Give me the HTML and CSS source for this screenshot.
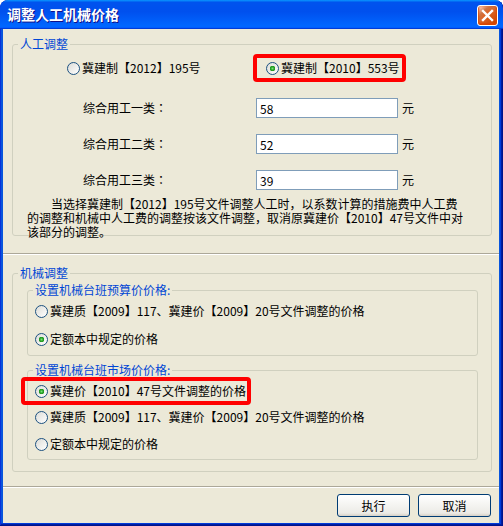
FILE: index.html
```html
<!DOCTYPE html>
<html lang="zh-CN">
<head>
<meta charset="utf-8">
<title>调整人工机械价格</title>
<link rel="stylesheet" href="styles.css">
</head>
<body>
<div class="window">
  <div class="titlebar">
    <span class="title">调整人工机械价格</span>
    <button class="close" aria-label="关闭"><svg viewBox="0 0 19 19" width="19" height="19"><path d="M5 5 L14 14 M14 5 L5 14" stroke="#fff" stroke-width="2.4" stroke-linecap="square" fill="none"/></svg></button>
  </div>
  <div class="client">
    <fieldset class="group labor">
      <legend>人工调整</legend>
      <div class="labor-choice">
        <label class="radio opt-first"><span class="dot"></span>冀建制【2012】195号</label>
        <label class="radio highlight opt-second"><span class="dot checked"></span>冀建制【2010】553号</label>
      </div>
      <div class="rates">
        <span class="rate-label">综合用工一类<span class="colon" lang="ja">：</span></span><input class="rate-input" value="58"><span class="unit">元</span>
        <span class="rate-label">综合用工二类<span class="colon" lang="ja">：</span></span><input class="rate-input" value="52"><span class="unit">元</span>
        <span class="rate-label">综合用工三类<span class="colon" lang="ja">：</span></span><input class="rate-input" value="39"><span class="unit">元</span>
      </div>
      <p class="note">当选择冀建制【2012】195号文件调整人工时，以系数计算的措施费中人工费<br>的调整和机械中人工费的调整按该文件调整，取消原冀建价【2010】47号文件中对<br>该部分的调整。</p>
    </fieldset>
    <div class="sep"></div>
    <fieldset class="group machine">
      <legend>机械调整</legend>
      <fieldset class="subgroup budget">
        <legend>设置机械台班预算价价格:</legend>
        <label class="radio item"><span class="dot"></span>冀建质【2009】117、冀建价【2009】20号文件调整的价格</label>
        <label class="radio item"><span class="dot checked"></span>定额本中规定的价格</label>
      </fieldset>
      <fieldset class="subgroup market">
        <legend>设置机械台班市场价价格:</legend>
        <label class="radio item highlight"><span class="dot checked"></span>冀建价【2010】47号文件调整的价格</label>
        <label class="radio item"><span class="dot"></span>冀建质【2009】117、冀建价【2009】20号文件调整的价格</label>
        <label class="radio item last"><span class="dot"></span>定额本中规定的价格</label>
      </fieldset>
    </fieldset>
    <div class="sep bottom-sep"></div>
    <div class="actions">
      <button class="btn">执行</button>
      <button class="btn">取消</button>
    </div>
  </div>
</div>
</body>
</html>
```

FILE: styles.css
```css
* { box-sizing: border-box; }
html, body { margin: 0; padding: 0; background: #ffffff; }
body {
  font-family: "Noto Sans CJK SC", "Liberation Sans", sans-serif;
  font-size: 12px;
  color: #000;
}

.window {
  width: 503px;
  height: 526px;
  display: flex;
  flex-direction: column;
  background: #0855dd;
  border-radius: 8px 8px 0 0;
  overflow: hidden;
  box-shadow: inset -1px -1px #00138c, inset 1px 0 #0831d9, inset -2px -2px #001ea0, inset -3px -3px #003bda;
}

.titlebar {
  height: 29px;
  flex: none;
  display: flex;
  align-items: flex-start;
  justify-content: space-between;
  padding: 0 5px 0 7px;
  background: linear-gradient(180deg, #0997ff, #0053ee 8%, #0050ee 40%, #0066ff 88%, #0066ff 93%, #005bff 95%, #003dd7 96%, #003dd7);
  border-radius: 8px 8px 0 0;
}
.title {
  color: #fff;
  font-weight: bold;
  font-size: 14px;
  line-height: 29px;
  text-shadow: 1px 1px #0f1089;
}
.close {
  margin-top: 5px;
  width: 21px;
  height: 21px;
  padding: 0;
  display: flex;
  align-items: center;
  justify-content: center;
  border: 1px solid #fff;
  border-radius: 3px;
  background: radial-gradient(circle at 90% 90%, #cc4600 0%, #dc6527 55%, #cd7546 70%, #ffccb2 90%, #fff 100%);
  box-shadow: inset 0 -1px 2px 1px #da4600;
}

.client {
  flex: 1;
  margin: 0 4px 3px 3px;
  background: #ece9d8;
  display: flex;
  flex-direction: column;
}

fieldset {
  margin: 0;
  padding: 0;
  border: 1px solid #d0d0bf;
  border-radius: 3px;
  min-width: 0;
}
legend {
  margin-left: 5px;
  padding: 0 2px;
  line-height: 14px;
  color: #0046d5;
  font-size: 12px;
}

.group { margin: 8px 7px 0 9px; }
.machine { margin-top: 11px; padding-bottom: 11px; }

.radio {
  display: flex;
  align-items: center;
  gap: 2px;
  white-space: nowrap;
  line-height: 14px;
}
.dot {
  flex: none;
  width: 13px;
  height: 13px;
  border-radius: 50%;
  border: 1px solid #1c5180;
  background: linear-gradient(135deg, #dcdcd7, #ffffff);
}
.dot.checked {
  background: radial-gradient(circle at 50% 50%, #7be07b 0, #2aa82a 1.6px, #1e8f1e 2.6px, transparent 3px), linear-gradient(135deg, #dcdcd7, #ffffff);
}

.highlight {
  border: 4px solid #ff0000;
  border-radius: 4px;
}

.labor-choice {
  display: flex;
  margin-top: 3px;
  padding-left: 54px;
  height: 28px;
}
.opt-first { width: 186px; }
.opt-second { width: 153px; padding-left: 9px; }

.rates {
  display: grid;
  grid-template-columns: 169px 142px auto;
  column-gap: 4px;
  row-gap: 16px;
  margin-top: 16px;
  padding-left: 70px;
  align-items: center;
}
.rate-label { line-height: 20px; }
.rates .rate-label { margin-right: -4px; }
.colon { font-family: "Noto Sans CJK JP", "Noto Sans CJK SC", sans-serif; }
.rate-input {
  width: 142px;
  height: 20px;
  border: 1px solid #7f9db9;
  padding: 0 3px;
  font-family: inherit;
  font-size: 12px;
  color: #000;
  background: #fff;
  outline: none;
}
.unit { line-height: 20px; }

.note {
  margin: 7px 0 -4px 14px;
  text-indent: 24px;
  line-height: 14px;
  white-space: nowrap;
}

.sep {
  flex: none;
  height: 2px;
  border-top: 1px solid #aca899;
  border-bottom: 1px solid #ffffff;
  margin-top: 17px;
}
.bottom-sep { margin-top: 14px; }

.subgroup { margin: 3px 13px 0 14px; }
.subgroup .item { height: 20px; padding-left: 7px; }
.budget { padding-bottom: 6px; }
.budget .item:first-of-type { margin-top: 4px; }
.budget .item + .item { margin-top: 8px; }

.market { margin-top: 7px; padding-bottom: 2px; }
.market .item { height: 26px; }
.market .item.highlight {
  height: 28px;
  width: 230px;
  margin-left: -7px;
  padding-left: 10px;
}
.market .highlight + .item { margin-top: -1px; }
.market .item.last { margin-top: 1px; }

.actions {
  display: flex;
  justify-content: flex-end;
  gap: 8px;
  margin: 6px 8px 0 0;
}
.btn {
  width: 73px;
  height: 23px;
  padding: 0;
  border: 1px solid #003c74;
  border-radius: 3px;
  background: linear-gradient(180deg, #ffffff, #ecebe6 86%, #d6d0c5);
  font-family: inherit;
  font-size: 12px;
  color: #000;
}
```
